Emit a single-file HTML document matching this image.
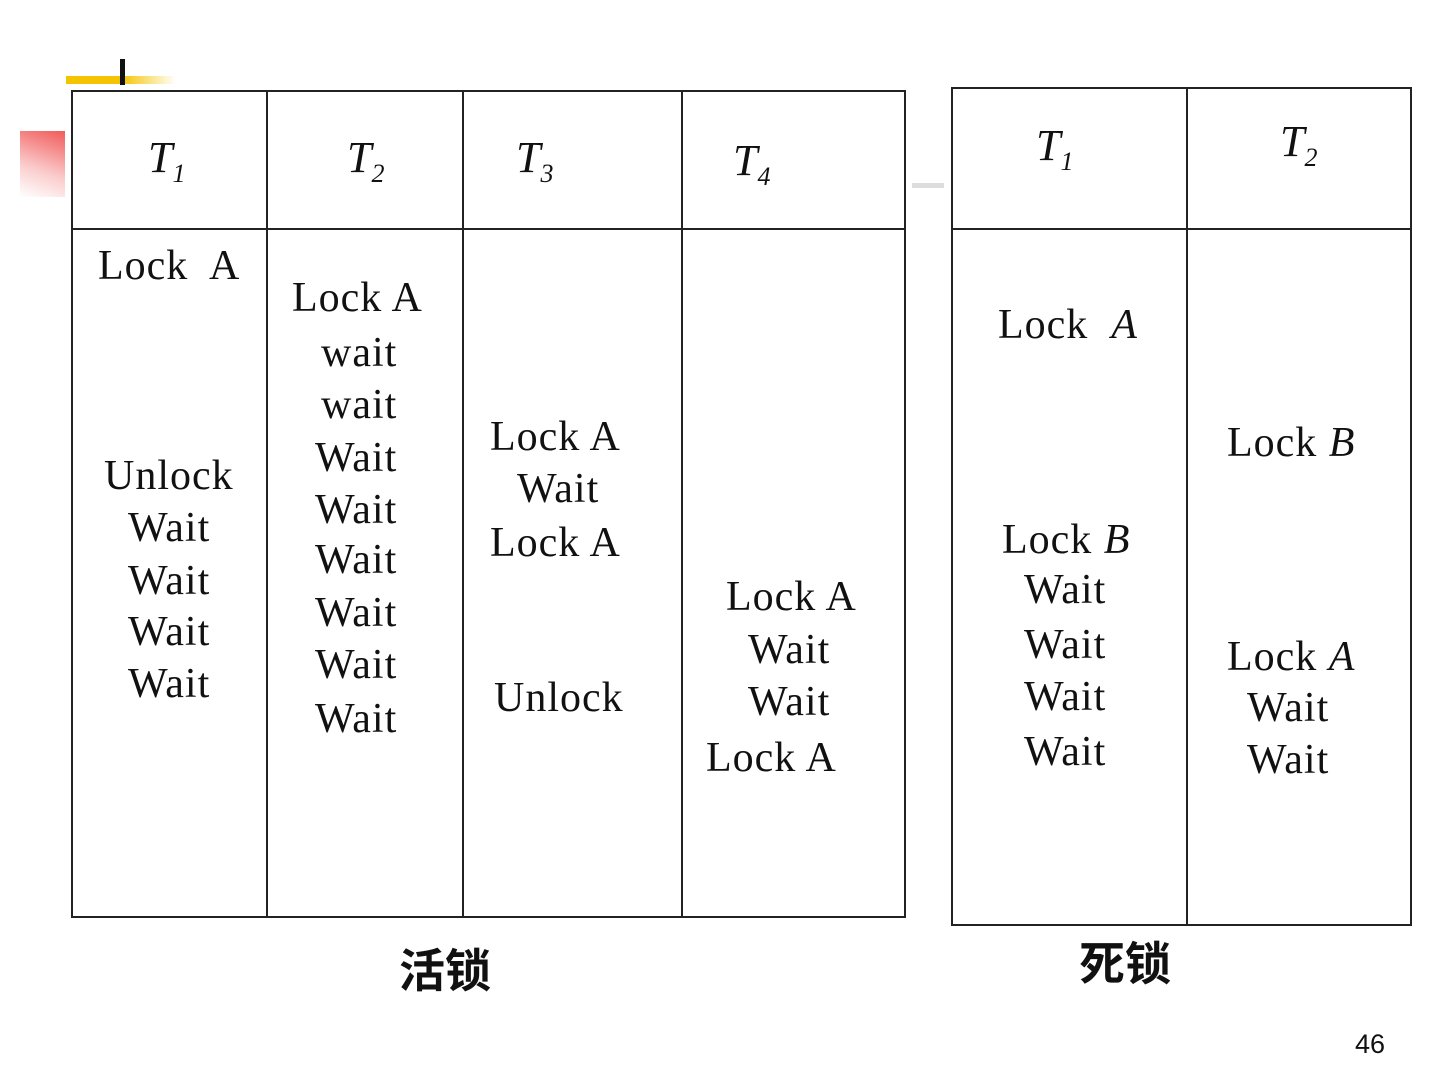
<!DOCTYPE html>
<html><head><meta charset="utf-8"><style>
html,body{margin:0;padding:0;background:#fff}
body{width:1440px;height:1080px;position:relative;overflow:hidden;font-family:"Liberation Serif",serif;color:#111}
.l{position:absolute;background:#222}
.t{position:absolute;font-size:42px;line-height:42px;white-space:pre;letter-spacing:1px}
.h{position:absolute;font-size:44px;line-height:44px;font-style:italic;white-space:pre}
.h sub{font-size:26px;vertical-align:-10px}
i{font-style:italic}
</style></head><body>
<div style="position:absolute;left:66px;top:76px;width:110px;height:8px;background:linear-gradient(90deg,#f5c400 0,#f5c400 50%,rgba(245,196,0,0) 100%)"></div>
<div style="position:absolute;left:120px;top:59px;width:5px;height:26px;background:#111"></div>
<div style="position:absolute;left:20px;top:131px;width:45px;height:66px;background:linear-gradient(200deg,#f15a5a 0,rgba(241,90,90,0.3) 60%,rgba(255,255,255,0) 100%)"></div>
<div style="position:absolute;left:912px;top:183px;width:32px;height:5px;background:#ddd"></div>

<div class="l" style="left:71px;top:90px;width:835px;height:2px"></div>
<div class="l" style="left:71px;top:228px;width:835px;height:2px"></div>
<div class="l" style="left:71px;top:916px;width:835px;height:2px"></div>
<div class="l" style="left:71px;top:90px;width:2px;height:828px"></div>
<div class="l" style="left:266px;top:90px;width:2px;height:828px"></div>
<div class="l" style="left:462px;top:90px;width:2px;height:828px"></div>
<div class="l" style="left:681px;top:90px;width:2px;height:828px"></div>
<div class="l" style="left:904px;top:90px;width:2px;height:828px"></div>
<div class="l" style="left:951px;top:87px;width:461px;height:2px"></div>
<div class="l" style="left:951px;top:228px;width:461px;height:2px"></div>
<div class="l" style="left:951px;top:924px;width:461px;height:2px"></div>
<div class="l" style="left:951px;top:87px;width:2px;height:839px"></div>
<div class="l" style="left:1186px;top:87px;width:2px;height:839px"></div>
<div class="l" style="left:1410px;top:87px;width:2px;height:839px"></div>

<div class="h" style="left:148px;top:136px">T<sub>1</sub></div>
<div class="h" style="left:347px;top:136px">T<sub>2</sub></div>
<div class="h" style="left:516px;top:136px">T<sub>3</sub></div>
<div class="h" style="left:733px;top:139px">T<sub>4</sub></div>
<div class="h" style="left:1036px;top:124px">T<sub>1</sub></div>
<div class="h" style="left:1280px;top:120px">T<sub>2</sub></div>

<div class="t" style="left:98px;top:245px">Lock  A</div>
<div class="t" style="left:104px;top:455px">Unlock</div>
<div class="t" style="left:128px;top:507px">Wait</div>
<div class="t" style="left:128px;top:560px">Wait</div>
<div class="t" style="left:128px;top:611px">Wait</div>
<div class="t" style="left:128px;top:663px">Wait</div>

<div class="t" style="left:292px;top:277px">Lock A</div>
<div class="t" style="left:321px;top:332px">wait</div>
<div class="t" style="left:321px;top:384px">wait</div>
<div class="t" style="left:315px;top:437px">Wait</div>
<div class="t" style="left:315px;top:489px">Wait</div>
<div class="t" style="left:315px;top:539px">Wait</div>
<div class="t" style="left:315px;top:592px">Wait</div>
<div class="t" style="left:315px;top:644px">Wait</div>
<div class="t" style="left:315px;top:698px">Wait</div>

<div class="t" style="left:490px;top:416px">Lock A</div>
<div class="t" style="left:517px;top:468px">Wait</div>
<div class="t" style="left:490px;top:522px">Lock A</div>
<div class="t" style="left:494px;top:677px">Unlock</div>

<div class="t" style="left:726px;top:576px">Lock A</div>
<div class="t" style="left:748px;top:629px">Wait</div>
<div class="t" style="left:748px;top:681px">Wait</div>
<div class="t" style="left:706px;top:737px">Lock A</div>

<div class="t" style="left:998px;top:304px">Lock  <i>A</i></div>
<div class="t" style="left:1002px;top:519px">Lock <i>B</i></div>
<div class="t" style="left:1024px;top:569px">Wait</div>
<div class="t" style="left:1024px;top:624px">Wait</div>
<div class="t" style="left:1024px;top:676px">Wait</div>
<div class="t" style="left:1024px;top:731px">Wait</div>

<div class="t" style="left:1227px;top:422px">Lock <i>B</i></div>
<div class="t" style="left:1227px;top:636px">Lock <i>A</i></div>
<div class="t" style="left:1247px;top:687px">Wait</div>
<div class="t" style="left:1247px;top:739px">Wait</div>

<div style="position:absolute;left:399px;top:945px;font-family:'Liberation Sans','Noto Sans CJK SC',sans-serif;font-size:46px;line-height:52px;font-weight:bold">活锁</div>
<div style="position:absolute;left:1079px;top:938px;font-family:'Liberation Sans','Noto Sans CJK SC',sans-serif;font-size:46px;line-height:52px;font-weight:bold">死锁</div>
<div style="position:absolute;left:1355px;top:1028px;font-family:'Liberation Sans',sans-serif;font-size:27px;line-height:32px">46</div>
</body></html>
